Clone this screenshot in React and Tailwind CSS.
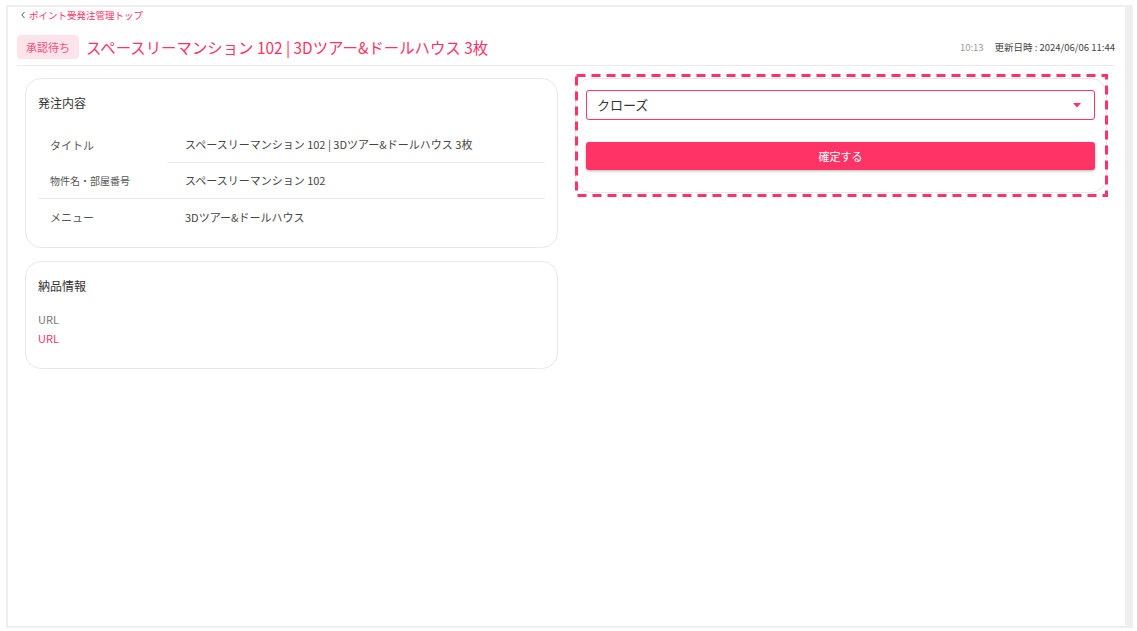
import React from 'react';

const PINK = '#ff3366';

function Row({ label, value, labelClass = 'text-[11px]', fullLine, halfLine }) {
  return (
    <div className={`flex h-9 items-center ${fullLine ? 'border-b border-[#ececec]' : ''}`}>
      <div className={`w-[129px] shrink-0 pl-3 text-[#555] ${labelClass}`}>{label}</div>
      <div
        className={`flex h-full flex-1 items-center pl-[18px] text-[11px] text-[#444] ${
          halfLine ? 'border-b border-[#ececec]' : ''
        }`}
      >
        {value}
      </div>
    </div>
  );
}

export default function App() {
  return (
    <div
      className="h-[631px] w-[1137px] bg-white pl-[6px] pt-[5px]"
      style={{ fontFamily: '"Noto Sans CJK JP", "Noto Sans", sans-serif' }}
    >
      <div className="h-[623px] w-[1127px] border-b-2 border-l-2 border-r-[8px] border-t-2 border-[#efefef] bg-white">
        {/* breadcrumb */}
        <div className="flex h-3 items-center gap-[3px] pl-3 pt-[4px]">
          <svg width="6" height="8" viewBox="0 0 6 8" className="mt-[-1px]">
            <path d="M4.5 1 L1.8 4 L4.5 7" fill="none" stroke="#555" strokeWidth="1" />
          </svg>
          <span className="text-[9.5px] leading-3 text-[#ff3366]">ポイント受発注管理トップ</span>
        </div>

        <div className="pl-[9px] pr-[10px]">
          {/* header */}
          <div className="mt-[16px] flex items-center border-b border-[#ececec] pb-[6px]">
            <span className="flex h-6 items-center rounded-[4px] bg-[#fde3ea] px-[9px] text-[11px] text-[#ff4f7b]">
              承認待ち
            </span>
            <h1 className="ml-[7px] text-[15.4px] leading-6 text-[#ff3366]">
              スペースリーマンション 102 | 3Dツアー&amp;ドールハウス 3枚
            </h1>
            <div className="ml-auto flex items-center gap-[11px] text-[9.5px]">
              <span className="text-[#999]">10:13</span>
              <span className="text-[#444]">更新日時 : 2024/06/06 11:44</span>
            </div>
          </div>

          {/* content */}
          <div className="mt-3 grid grid-cols-[533px_532px] gap-[17px] px-2">
            <div className="flex flex-col gap-[13px]">
              <section className="rounded-[16px] border border-[#e8e8e8] px-3 pb-3 pt-[15px]">
                <h2 className="text-[12px] leading-[18px] text-[#333]">発注内容</h2>
                <div className="mt-[15px]">
                  <Row
                    label="タイトル"
                    value="スペースリーマンション 102 | 3Dツアー&ドールハウス 3枚"
                    halfLine
                  />
                  <Row
                    label="物件名・部屋番号"
                    labelClass="text-[10px]"
                    value="スペースリーマンション 102"
                    fullLine
                  />
                  <Row label="メニュー" value="3Dツアー&ドールハウス" />
                </div>
              </section>

              <section className="rounded-[16px] border border-[#e8e8e8] px-3 pb-5 pt-[15px]">
                <h2 className="text-[12px] leading-[18px] text-[#333]">納品情報</h2>
                <div className="mt-[15px] text-[11px] leading-[19px]">
                  <div className="text-[#777]">URL</div>
                  <div className="text-[#ff3366]">URL</div>
                </div>
              </section>
            </div>

            <div className="relative self-start">
              <section className="rounded-[16px] border border-[#e8e8e8] pb-[22px] pl-[10px] pr-[11px] pt-[11px]">
                <div className="flex h-[30px] items-center justify-between rounded-[3px] border border-[#ff3366] pl-[10px] pr-[13px]">
                  <span className="text-[13px] text-[#333]">クローズ</span>
                  <svg width="8" height="5" viewBox="0 0 8 5">
                    <path d="M0 0 L8 0 L4 4.5 Z" fill={PINK} />
                  </svg>
                </div>
                <button className="mt-[22px] flex h-7 w-full items-center justify-center rounded-[3px] bg-[#ff3366] text-[11px] text-white shadow-[0_1px_3px_rgba(0,0,0,0.3)]">
                  確定する
                </button>
              </section>
              {/* highlight overlay */}
              <svg
                width="533"
                height="123"
                viewBox="0 0 533 123"
                className="pointer-events-none absolute -top-1 left-0"
              >
                <rect
                  x="1.5"
                  y="1.5"
                  width="530"
                  height="120"
                  fill="none"
                  stroke={PINK}
                  strokeWidth="3"
                  strokeDasharray="9 6"
                />
              </svg>
            </div>
          </div>
        </div>
      </div>
    </div>
  );
}
